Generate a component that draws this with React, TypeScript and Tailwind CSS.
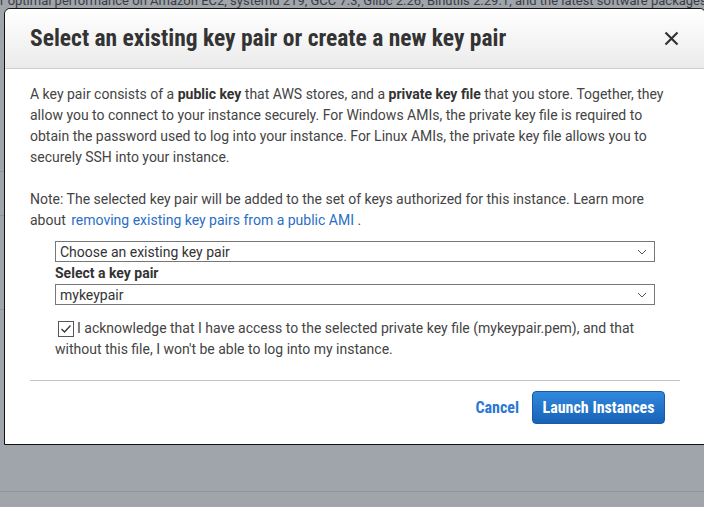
import React from "react";

const condensed = {
  fontFamily: '"Roboto Condensed", "Liberation Sans Narrow", Roboto, sans-serif',
};

function Chevron() {
  return (
    <svg width="10" height="6" viewBox="0 0 10 6" fill="none" stroke="#555" strokeWidth="1">
      <path d="M1 1l4 4 4-4" />
    </svg>
  );
}

function SelectBox({ value }: { value: string }) {
  return (
    <div className="flex h-[21px] w-[600px] items-center justify-between border border-[#777] bg-white pl-[4px] pr-[7px] text-[14px] leading-none text-[#333]">
      <span>{value}</span>
      <Chevron />
    </div>
  );
}

export default function App() {
  return (
    <div
      className="relative h-[507px] w-[704px] overflow-hidden bg-[#a0a4ab]"
      style={{ fontFamily: "Roboto, 'Liberation Sans', sans-serif" }}
    >
      {/* page behind the overlay */}
      <div className="text-[13px] text-[#3a3d42]">
        <div className="-mt-[8px] h-[18px] whitespace-nowrap leading-[18px]">
          r optimal performance on Amazon EC2, systemd 219, GCC 7.3, Glibc 2.26, Binutils 2.29.1, and the latest software packages
        </div>
        <div className="h-[162px] border-b border-[#8e9299]" />
        <div className="h-[44px] border-b border-[#8e9299]" />
        <div className="h-[94px] border-b border-[#8e9299]" />
        <div className="h-[182px] border-b border-[#8e9299]" />
      </div>

      {/* modal */}
      <div className="absolute left-[4px] top-[8px] flex h-[437px] w-[702px] flex-col rounded-t-[6px] border border-[#111] bg-white">
        <div className="flex h-[60px] items-center justify-between rounded-t-[6px] border-b border-[#cfcfcf] bg-gradient-to-b from-white to-[#ebebeb] pl-[25px] pr-[26px]">
          <h1 className="text-[23.5px] font-bold text-[#333]" style={condensed}>
            Select an existing key pair or create a new key pair
          </h1>
          <svg width="15" height="15" viewBox="0 0 15 15" stroke="#333" strokeWidth="2.2">
            <path d="M1.5 1.5l12 12M13.5 1.5l-12 12" />
          </svg>
        </div>

        <div className="px-[25px] pt-[15px] text-[14px] leading-[21px] text-[#444]">
          <p>
            A key pair consists of a <b className="text-[#333]">public key</b> that AWS stores, and a{" "}
            <b className="text-[#333]">private key file</b> that you store. Together, they allow you to connect to
            your instance securely. For Windows AMIs, the private key file is required to obtain the password used
            to log into your instance. For Linux AMIs, the private key file allows you to securely SSH into your
            instance.
          </p>
          <p className="mt-[21px]">
            Note: The selected key pair will be added to the set of keys authorized for this instance. Learn more
            about <a className="ml-[2px] text-[#2a6ec6]">removing existing key pairs from a public AMI</a> .
          </p>

          <div className="mt-[10px] pl-[25px]">
            <SelectBox value="Choose an existing key pair" />
            <div className="pt-[1px] font-bold text-[#333]">Select a key pair</div>
            <SelectBox value="mykeypair" />
            <div className="mt-[13px]">
              <span className="mr-[3px] ml-[3px] inline-flex h-[16px] w-[16px] translate-y-[1px] items-center justify-center border border-[#555] bg-white align-baseline">
                <svg width="12" height="10" viewBox="0 0 12 10" fill="none" stroke="#333" strokeWidth="1.3">
                  <path d="M1.5 5l3 3 6-6.5" />
                </svg>
              </span>
              I acknowledge that I have access to the selected private key file (mykeypair.pem), and that without
              this file, I won't be able to log into my instance.
            </div>
          </div>

          <div className="mt-[20px] border-t border-[#c4c4c4]" />

          <div className="mt-[10px] flex items-center justify-end gap-[13px] pr-[15px]" style={condensed}>
            <button className="text-[16px] font-bold text-[#2b78d4]">Cancel</button>
            <button className="h-[33px] w-[133px] rounded-[4px] border border-[#1a5aa6] bg-gradient-to-b from-[#3189dc] to-[#1862b8] text-[16px] font-bold text-white">
              Launch Instances
            </button>
          </div>
        </div>
      </div>
    </div>
  );
}
